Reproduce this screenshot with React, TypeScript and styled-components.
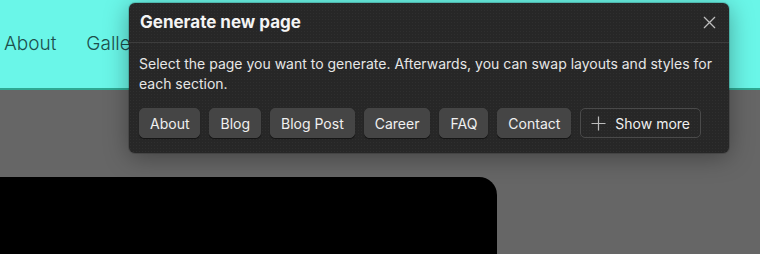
import React from "react";
import styled, { createGlobalStyle } from "styled-components";

const Global = createGlobalStyle`
  html, body { margin: 0; padding: 0; }
  body { width: 760px; height: 254px; overflow: hidden; background: #666666; font-family: Inter, "Liberation Sans", Arial, sans-serif; }
`;

const Page = styled.div`
  position: relative;
  width: 760px;
  height: 254px;
  overflow: hidden;
  display: flex;
  flex-direction: column;
`;

const Header = styled.header`
  height: 88px;
  background: #6af6e8;
  border-bottom: 2px solid #2fa892;
  display: flex;
  align-items: center;
  gap: 30px;
  padding: 0 0 0 4px;
  flex: none;
`;

const NavLink = styled.span`
  font-family: Inter, "Open Sans", sans-serif;
  font-weight: 300;
  font-size: 19px;
  color: #1d4f4c;
  line-height: 1;
  margin-top: -2px;
`;

const Body = styled.div`
  flex: 1;
  padding-top: 87px;
`;

const Hero = styled.div`
  width: 497px;
  height: 100px;
  background: #000;
  border-top-right-radius: 18px;
`;

const Popover = styled.div`
  position: absolute;
  left: 129px;
  top: 3px;
  width: 600px;
  height: 150px;
  box-sizing: border-box;
  border-radius: 6px;
  background-color: #272727;
  background-image: radial-gradient(rgba(255,255,255,0.035) 0.6px, transparent 0.8px);
  background-size: 3px 3px;
  box-shadow: 0 4px 24px rgba(0,0,0,0.35), 0 0 0 1px rgba(0,0,0,0.15);
  display: flex;
  flex-direction: column;
`;

const PopHeader = styled.div`
  height: 39px;
  display: flex;
  align-items: center;
  justify-content: space-between;
  padding: 0 12px 0 11px;
  border-bottom: 1px solid #3d3d3d;
`;

const Title = styled.h2`
  margin: 0 0 2px 0;
  font-size: 17px;
  font-weight: 700;
  color: #f4f4f4;
  letter-spacing: 0;
`;

const Close = styled.button`
  width: 16px;
  height: 16px;
  padding: 0;
  border: 0;
  background: transparent;
  display: flex;
  align-items: center;
  justify-content: center;
  cursor: pointer;
`;

const PopBody = styled.div`
  padding: 11px 11px 0 10px;
  display: flex;
  flex-direction: column;
  gap: 14px;
`;

const Desc = styled.p`
  margin: 0;
  font-size: 14px;
  line-height: 20px;
  color: #e6e6e6;
`;

const Row = styled.div`
  display: flex;
  gap: 9px;
`;

const Chip = styled.button<{ $outline?: boolean }>`
  height: 30px;
  box-sizing: border-box;
  padding: 0 10px;
  border-radius: 5px;
  font-family: Inter, "Liberation Sans", Arial, sans-serif;
  font-size: 14px;
  color: #f0f0f0;
  display: flex;
  align-items: center;
  gap: 9px;
  cursor: pointer;
  background: ${(p) => (p.$outline ? "transparent" : "#454545")};
  border: 1px solid ${(p) => (p.$outline ? "#4a4a4a" : "#454545")};
  box-shadow: ${(p) => (p.$outline ? "none" : "0 1px 1px rgba(0,0,0,0.5)")};
`;

const items = ["About", "Blog", "Blog Post", "Career", "FAQ", "Contact"];

export default function App() {
  return (
    <>
      <Global />
      <Page>
        <Header>
          <NavLink>About</NavLink>
          <NavLink>Gallery</NavLink>
        </Header>
        <Body>
          <Hero />
        </Body>
        <Popover>
          <PopHeader>
            <Title>Generate new page</Title>
            <Close aria-label="Close">
              <svg width="13" height="13" viewBox="0 0 13 13">
                <path d="M1 1L12 12M12 1L1 12" stroke="#bdbdbd" strokeWidth="1.3" />
              </svg>
            </Close>
          </PopHeader>
          <PopBody>
            <Desc>
              Select the page you want to generate. Afterwards, you can swap layouts and styles for each section.
            </Desc>
            <Row>
              {items.map((t) => (
                <Chip key={t}>{t}</Chip>
              ))}
              <Chip $outline>
                <svg width="15" height="15" viewBox="0 0 15 15">
                  <path d="M7.5 0.5V14.5M0.5 7.5H14.5" stroke="#bbbbbb" strokeWidth="1.2" />
                </svg>
                Show more
              </Chip>
            </Row>
          </PopBody>
        </Popover>
      </Page>
    </>
  );
}
